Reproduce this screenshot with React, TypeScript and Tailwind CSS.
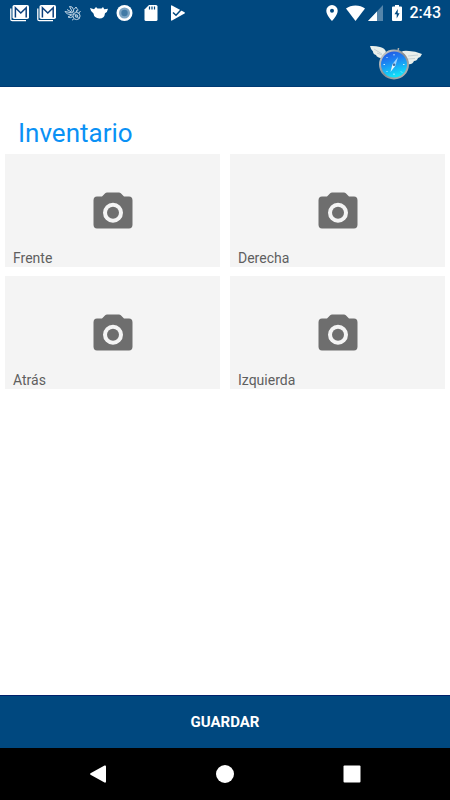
interface Photo {
  key: string;
  label: string;
}

const PHOTOS: Photo[] = [
  { key: "front", label: "Frente" },
  { key: "right", label: "Derecha" },
  { key: "back", label: "Atrás" },
  { key: "left", label: "Izquierda" },
];

function MailIcon() {
  return (
    <svg width="19" height="18" viewBox="0 0 19 18" fill="none" aria-hidden="true">
      <path d="M.8 4.500v10.700q0 1.500 1.500 1.500H16" stroke="white" strokeWidth="1.300" />
      <rect x="2.500" y="1" width="16.500" height="14" rx="1.800" fill="white" />
      <path d="M5.400 13.500V3.800l5.400 5.200 5.400-5.200v9.700" stroke="#0b3f7c" strokeWidth="1.500" />
    </svg>
  );
}

function BugIcon() {
  return (
    <svg width="18" height="18" viewBox="0 0 18 18" fill="none" stroke="#c3d6e6" strokeWidth="1" aria-hidden="true">
      <path d="M9 9L5.500 2.500Q8.500 2 9.500 5.500L9.700 8M8.500 9L1 7.500q1.500 3.500 6.500 3M8.500 10.500L4 13q2.500 1.500 5-.5M3 5.500L7.500 8" />
      <path d="M10 5.500l2-2.500 1.500 2.500-1.500 2" />
      <circle cx="12.500" cy="12" r="3.600" />
      <circle cx="12.500" cy="12" r="1.300" />
      <path d="M12 8L14.500 6M14.500 9.500l2-2.500M10 9.500l5 5M9.500 15.500l-1.500 .5" />
    </svg>
  );
}

function BirdIcon() {
  return (
    <svg width="18" height="18" viewBox="0 0 18 18" fill="white" aria-hidden="true">
      <path d="M0 4l4 1.300L6 3l1.500 1.500h4L13 3l1.300 2.200L18 4.800q-.5 3.500-3 4.400-.5 5.300-5.500 5.300-5.500-.3-6-5Q.7 7.800 0 4z" />
    </svg>
  );
}

function RecordIcon() {
  return (
    <svg width="17" height="18" viewBox="0 0 17 18" aria-hidden="true">
      <circle cx="8.5" cy="9" r="8" fill="white" />
      <circle cx="8.5" cy="9" r="5.5" fill="#7ca5c4" />
      <circle cx="8.5" cy="9" r="3.200" fill="#427ba6" />
    </svg>
  );
}

function SdCardIcon() {
  return (
    <svg width="18" height="18" viewBox="0 0 18 18" aria-hidden="true">
      <path d="M8 1h7q1.500 0 1.500 1.500v13Q16.500 17 15 17H5q-1.500 0-1.500-1.500v-10z" fill="white" />
      <path d="M8.500 2.500v3M11 2.500v3M13.500 2.500v3" stroke="#00487f" strokeWidth="1.200" />
    </svg>
  );
}

function PlayCheckIcon() {
  return (
    <svg width="18" height="18" viewBox="0 0 18 18" aria-hidden="true">
      <path d="M4 2q0-1 1-.5L17.500 8.300q.8.700 0 1.300L5 16.500q-1 .5-1-.7z" fill="white" />
      <path d="M6 8.500L9 11.300l6.500-7" fill="none" stroke="#00487f" strokeWidth="1.500" />
    </svg>
  );
}

function StatusBar() {
  return (
    <div className="flex h-[26px] items-center pl-[10px] pr-[9px] text-white">
      <div className="flex items-center gap-2">
        <MailIcon />
        <MailIcon />
        <BugIcon />
        <BirdIcon />
        <RecordIcon />
        <SdCardIcon />
        <PlayCheckIcon />
      </div>
      <div className="ml-auto flex items-center">
        <svg className="mr-2" width="12" height="16" viewBox="0 0 12 16" aria-hidden="true">
          <path fill="white" fillRule="evenodd" d="M6 0a5.700 5.700 0 0 1 5.700 5.700C11.700 10 6 16 6 16S.3 10 .3 5.700A5.700 5.700 0 0 1 6 0zm0 3.700a2 2 0 1 0 0 4 2 2 0 0 0 0-4z" />
        </svg>
        <svg className="mr-[3px]" width="19" height="16" viewBox="0 0 19 16" fill="white" aria-hidden="true">
          <path d="M0 3.500Q4 .5 9.500 .5T19 3.500L9.500 16z" />
        </svg>
        <svg className="mr-[9px]" width="15" height="16" viewBox="0 0 15 16" aria-hidden="true">
          <path d="M15 0v16H0z" fill="#5585aa" />
          <path d="M9 6.400V16H0z" fill="white" />
        </svg>
        <svg className="mr-2" width="10" height="16" viewBox="0 0 10 16" aria-hidden="true">
          <path d="M3 0h4v1.500h2q1 0 1 1V15q0 1-1 1H1q-1 0-1-1V2.500q0-1 1-1h2z" fill="white" />
          <path d="M5.800 4L2.500 9.300h2.200V13.500L7.600 8.300H5.700z" fill="#00487f" />
        </svg>
        <span className="text-[16px] leading-5 font-medium">2:43</span>
      </div>
    </div>
  );
}

function CompassLogo() {
  return (
    <svg width="54" height="40" viewBox="0 0 54 40" aria-hidden="true">
      <defs>
        <linearGradient id="dial" x1="0" y1="0" x2="0.300" y2="1">
          <stop offset="0" stopColor="#2449e0" />
          <stop offset="0.450" stopColor="#1c84f2" />
          <stop offset="1" stopColor="#12e2fa" />
        </linearGradient>
        <linearGradient id="rim" x1="0" y1="0" x2="1" y2="1">
          <stop offset="0" stopColor="#d5d7d5" />
          <stop offset="0.500" stopColor="#858b91" />
          <stop offset="1" stopColor="#b9bdbd" />
        </linearGradient>
      </defs>
      <path d="M1 3q5-.5 10 1 5 1 6 5l-5 6q-4-.5-5-3-3-1-3-3.500Q1.500 6 1 3z" fill="#e9efeb" />
      <path d="M32 9q3-2 8-1 6 0 13 3-1 3-4 4-1 3-4 3-2 4-6 3-3-2-4-6z" fill="#e9efeb" />
      <path d="M5 6l8 5M8 10l5 2M39 13l10-1M39 16l7-.5" stroke="#b7c6cb" strokeWidth="0.700" />
      <path d="M29 8.500l.5-3.500" stroke="#aaaead" strokeWidth="1.500" />
      <circle cx="25" cy="21.500" r="14" fill="url(#dial)" stroke="url(#rim)" strokeWidth="2" />
      <path d="M25 11v1.500M25 30.500v1.500M14.500 21.500H16M34 21.500h1.500M17.500 14l1 1M32 28.500l1 1M17.500 29l1-1" stroke="#c9efff" strokeWidth="1" />
      <path d="M29 14l-2.500 8.500-3-1.500z" fill="#9cd3ff" />
      <path d="M21.500 29l2-8 3 1.500z" fill="#e6f8ff" />
      <circle cx="25" cy="21.700" r="1.300" fill="#426da0" />
    </svg>
  );
}

function CameraIcon() {
  return (
    <svg width="40" height="37" viewBox="0 0 40 37" fill="#6e6e6e" aria-hidden="true">
      <path
        fillRule="evenodd"
        d="M14 .5h12q1 0 1.800.8L31 4.500h5q3.500 0 3.500 4v24q0 4-3.500 4H4q-3.500 0-3.500-4v-24q0-4 3.500-4h5L12.200 1.300Q13 .5 14 .5zm6 10.200a10 10 0 1 0 0 20 10 10 0 0 0 0-20z"
      />
      <circle cx="20" cy="20.700" r="6" />
    </svg>
  );
}

function PhotoCard({ label }: { label: string }) {
  return (
    <button type="button" className="flex h-[113px] cursor-pointer flex-col bg-[#f4f4f4] text-left">
      <span className="flex w-full justify-center pt-[38px]">
        <CameraIcon />
      </span>
      <span className="mt-auto px-2 text-[14px] leading-[18px] text-[#5f5f5f]">{label}</span>
    </button>
  );
}

export default function App() {
  return (
    <div className="flex min-h-screen flex-col bg-white font-['Roboto',sans-serif]">
      <header className="border-b border-[#003a73] bg-[#00487f]">
        <StatusBar />
        <div className="flex h-[60px] items-end justify-end pr-[27px] pb-[3px]">
          <a href="#inicio" aria-label="Inicio">
            <CompassLogo />
          </a>
        </div>
      </header>

      <main className="flex-1">
        <h1 className="px-[18px] pt-[30px] pb-[5px] text-[26px] leading-8 text-[#0a91f5]">Inventario</h1>
        <div className="grid grid-cols-2 gap-x-[10px] gap-y-[9px] px-[5px]">
          {PHOTOS.map((p) => (
            <PhotoCard key={p.key} label={p.label} />
          ))}
        </div>
      </main>

      <button
        type="button"
        className="h-[53px] cursor-pointer border-t border-[#00206b] bg-[#00487f] text-[15px] font-bold text-white"
      >
        GUARDAR
      </button>

      <nav className="flex h-[52px] items-center justify-between bg-black px-[89px]">
        <button type="button" aria-label="Atrás">
          <svg width="18" height="18" viewBox="0 0 18 18" fill="white" aria-hidden="true">
            <path d="M15.500 .5Q17 0 17 1.500v15Q17 18 15.500 17.500L1.500 9.700q-1-.7 0-1.400z" />
          </svg>
        </button>
        <button type="button" aria-label="Inicio">
          <svg width="18" height="18" viewBox="0 0 18 18" fill="white" aria-hidden="true">
            <circle cx="9" cy="9" r="9" />
          </svg>
        </button>
        <button type="button" aria-label="Recientes">
          <svg width="18" height="18" viewBox="0 0 18 18" fill="white" aria-hidden="true">
            <rect x="0.500" y="0.500" width="17" height="17" rx="1" />
          </svg>
        </button>
      </nav>
    </div>
  );
}
